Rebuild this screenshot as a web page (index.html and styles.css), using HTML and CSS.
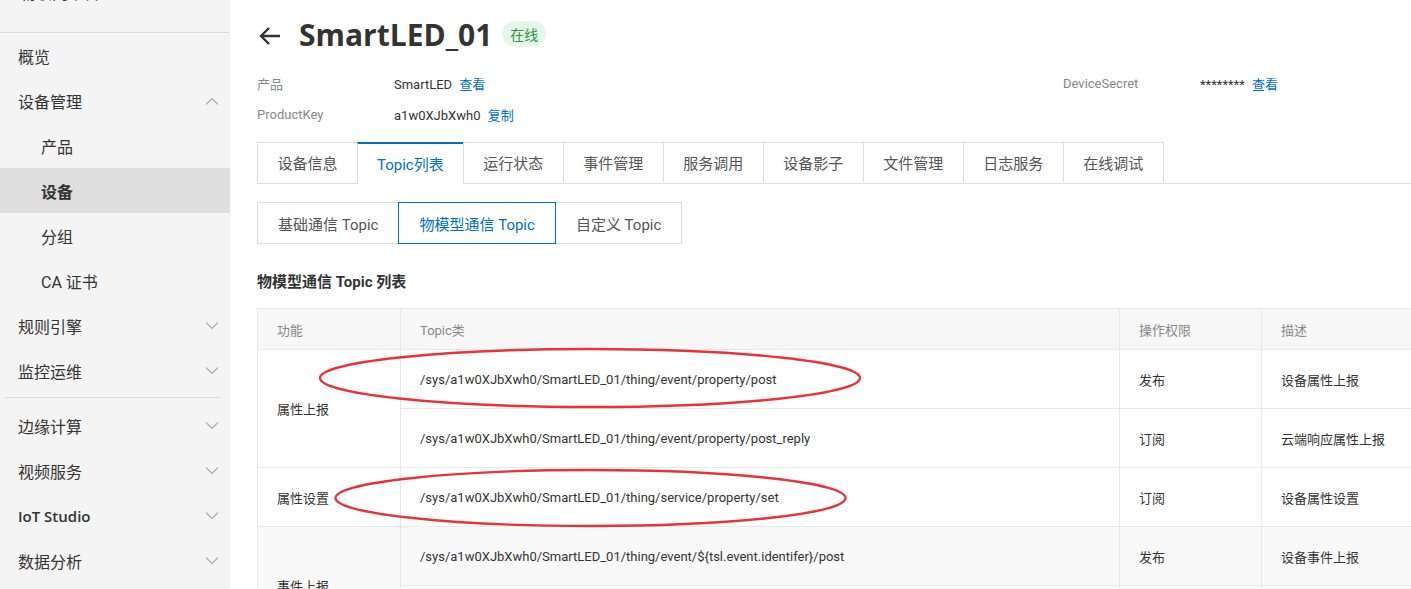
FILE: index.html
```html
<!DOCTYPE html>
<html lang="zh-CN">
<head>
    <meta charset="UTF-8">
    <title>SmartLED_01 - 设备详情</title>
    <link rel="stylesheet" href="styles.css">
</head>
<body>
<div class="layout">
    <aside class="sidebar">
        <div class="brand"><span>物联网平台</span></div>
        <nav class="menu">
            <a class="item">概览</a>
            <a class="item">设备管理
                <svg class="chev" width="14" height="8" viewBox="0 0 14 8"><path d="M1 7.5L7 1.5L13 7.5" fill="none" stroke="#aaa" stroke-width="1.1"/></svg>
            </a>
            <a class="item sub">产品</a>
            <a class="item sub active">设备</a>
            <a class="item sub">分组</a>
            <a class="item sub">CA 证书</a>
            <a class="item">规则引擎
                <svg class="chev" width="14" height="8" viewBox="0 0 14 8"><path d="M1 0.5L7 6.5L13 0.5" fill="none" stroke="#aaa" stroke-width="1.1"/></svg>
            </a>
            <a class="item">监控运维
                <svg class="chev" width="14" height="8" viewBox="0 0 14 8"><path d="M1 0.5L7 6.5L13 0.5" fill="none" stroke="#aaa" stroke-width="1.1"/></svg>
            </a>
            <div class="divider"></div>
            <a class="item">边缘计算
                <svg class="chev" width="14" height="8" viewBox="0 0 14 8"><path d="M1 0.5L7 6.5L13 0.5" fill="none" stroke="#aaa" stroke-width="1.1"/></svg>
            </a>
            <a class="item">视频服务
                <svg class="chev" width="14" height="8" viewBox="0 0 14 8"><path d="M1 0.5L7 6.5L13 0.5" fill="none" stroke="#aaa" stroke-width="1.1"/></svg>
            </a>
            <a class="item latin">IoT Studio
                <svg class="chev" width="14" height="8" viewBox="0 0 14 8"><path d="M1 0.5L7 6.5L13 0.5" fill="none" stroke="#aaa" stroke-width="1.1"/></svg>
            </a>
            <a class="item">数据分析
                <svg class="chev" width="14" height="8" viewBox="0 0 14 8"><path d="M1 0.5L7 6.5L13 0.5" fill="none" stroke="#aaa" stroke-width="1.1"/></svg>
            </a>
        </nav>
    </aside>

    <main class="main">
        <div class="page-head">
            <svg class="back" width="24" height="20" viewBox="0 0 24 20"><path d="M22 10H3M11 2L3 10L11 18" fill="none" stroke="#333" stroke-width="2.4"/></svg>
            <h1>SmartLED_01</h1>
            <span class="badge">在线</span>
        </div>

        <div class="info">
            <span class="label">产品</span>
            <span class="value">SmartLED <a class="link">查看</a></span>
            <span class="label">DeviceSecret</span>
            <span class="value">******** <a class="link">查看</a></span>
            <span class="label">ProductKey</span>
            <span class="value">a1w0XJbXwh0 <a class="link">复制</a></span>
        </div>

        <div class="tabs">
            <a class="tab">设备信息</a>
            <a class="tab active">Topic列表</a>
            <a class="tab">运行状态</a>
            <a class="tab">事件管理</a>
            <a class="tab">服务调用</a>
            <a class="tab">设备影子</a>
            <a class="tab">文件管理</a>
            <a class="tab">日志服务</a>
            <a class="tab">在线调试</a>
        </div>

        <div class="subtabs">
            <a class="subtab">基础通信 Topic</a>
            <a class="subtab active">物模型通信 Topic</a>
            <a class="subtab">自定义 Topic</a>
        </div>

        <h2 class="section-title">物模型通信 Topic 列表</h2>

        <div class="table-wrap">
            <table class="topics">
                <colgroup>
                    <col class="c-func">
                    <col class="c-topic">
                    <col class="c-perm">
                    <col class="c-desc">
                </colgroup>
                <thead>
                    <tr>
                        <th>功能</th>
                        <th>Topic类</th>
                        <th>操作权限</th>
                        <th>描述</th>
                    </tr>
                </thead>
                <tbody>
                    <tr>
                        <td rowspan="2">属性上报</td>
                        <td>/sys/a1w0XJbXwh0/SmartLED_01/thing/event/property/post</td>
                        <td>发布</td>
                        <td>设备属性上报</td>
                    </tr>
                    <tr>
                        <td>/sys/a1w0XJbXwh0/SmartLED_01/thing/event/property/post_reply</td>
                        <td>订阅</td>
                        <td>云端响应属性上报</td>
                    </tr>
                    <tr>
                        <td>属性设置</td>
                        <td>/sys/a1w0XJbXwh0/SmartLED_01/thing/service/property/set</td>
                        <td>订阅</td>
                        <td>设备属性设置</td>
                    </tr>
                    <tr class="hover">
                        <td rowspan="2">事件上报</td>
                        <td>/sys/a1w0XJbXwh0/SmartLED_01/thing/event/${tsl.event.identifer}/post</td>
                        <td>发布</td>
                        <td>设备事件上报</td>
                    </tr>
                    <tr class="hover">
                        <td>/sys/a1w0XJbXwh0/SmartLED_01/thing/event/${tsl.event.identifer}/post_reply</td>
                        <td>订阅</td>
                        <td>云端响应事件上报</td>
                    </tr>
                </tbody>
            </table>
            <svg class="marks" width="700" height="240" viewBox="0 0 700 240">
                <ellipse cx="333" cy="70" rx="270" ry="29" fill="none" stroke="#e8333b" stroke-width="2.4"/>
                <ellipse cx="333.5" cy="190" rx="255" ry="28" fill="none" stroke="#e8333b" stroke-width="2.4"/>
            </svg>
        </div>
    </main>
</div>
</body>
</html>
```

FILE: styles.css
```css
body {
    margin: 0;
    font-family: Roboto, "Noto Sans CJK SC", sans-serif;
    color: #333;
    background-color: #fff;
    overflow: hidden;
}
a {
    cursor: pointer;
}
.layout {
    display: flex;
    min-height: 100vh;
}
.sidebar {
    width: 230px;
    flex-shrink: 0;
    background-color: #f4f4f4;
}
.brand {
    height: 32px;
    overflow: hidden;
    border-bottom: 1px solid #dcdcdc;
    padding: 0 20px;
}
.brand span {
    display: block;
    margin-top: -14px;
    font-size: 16px;
    line-height: 16px;
    color: #333;
}
.menu {
    display: flex;
    flex-direction: column;
}
.item {
    height: 45px;
    display: flex;
    align-items: center;
    justify-content: space-between;
    padding: 0 11px 0 18px;
    font-size: 16px;
    color: #333;
}
.item.sub {
    padding-left: 41px;
}
.item.active {
    background-color: #dedede;
    font-weight: bold;
}
.item.latin {
    font-family: "Open Sans", "Noto Sans CJK SC", sans-serif;
    font-weight: 600;
    font-size: 15px;
}
.divider {
    height: 1px;
    background-color: #dcdcdc;
    margin: 4px 9px 5px 5px;
}
.main {
    flex: 1;
    min-width: 0;
    padding-left: 27px;
}
.page-head {
    height: 68px;
    display: flex;
    align-items: center;
}
.back {
    margin: 4px 17px 0 1px;
}
.page-head h1 {
    margin: 0;
    font-family: "Open Sans", sans-serif;
    font-size: 30px;
    font-weight: bold;
    color: #333;
}
.badge {
    margin-left: 10px;
    padding: 3px 8px;
    border-radius: 13px;
    background-color: #e6f6ea;
    color: #2f9444;
    font-size: 14px;
}
.info {
    display: grid;
    grid-template-columns: 137px 669px 137px auto;
    grid-auto-rows: 31px;
    align-items: center;
    font-size: 13px;
}
.label {
    color: #888;
}
.value {
    color: #333;
}
.link {
    color: #0070cc;
    margin-left: 4px;
}
.tabs {
    display: flex;
    align-items: flex-start;
    height: 41px;
    margin-top: 12px;
    border-bottom: 1px solid #ddd;
    width: 1300px;
}
.tab {
    box-sizing: border-box;
    min-width: 101px;
    height: 40px;
    display: flex;
    align-items: center;
    justify-content: center;
    padding: 0 19px;
    border: 1px solid #ddd;
    border-bottom: none;
    margin-left: -1px;
    font-size: 15px;
    color: #555;
    background-color: #fff;
}
.tab:first-child {
    margin-left: 0;
}
.tab.active {
    color: #0070cc;
    border-top: 2px solid #0070cc;
    height: 42px;
    margin-bottom: -1px;
    padding-bottom: 1px;
}
.subtabs {
    display: flex;
    margin-top: 18px;
}
.subtab {
    height: 40px;
    display: flex;
    align-items: center;
    padding: 0 20px;
    border: 1px solid #ddd;
    margin-left: -1px;
    font-size: 15px;
    color: #555;
    background-color: #fff;
}
.subtab:first-child {
    margin-left: 0;
}
.subtab.active {
    border-color: #0070cc;
    color: #0070cc;
    position: relative;
}
.section-title {
    margin: 28px 0 16px;
    font-size: 15px;
    line-height: 20px;
    font-weight: bold;
}
.table-wrap {
    position: relative;
    width: 1220px;
}
.topics {
    width: 100%;
    border-collapse: collapse;
    font-size: 13px;
    table-layout: fixed;
}
.topics th,
.topics td {
    border: 1px solid #e8e8e8;
    padding: 0 19px;
    text-align: left;
    white-space: nowrap;
}
.topics th {
    height: 40px;
    background-color: #f7f7f7;
    color: #888;
    font-weight: normal;
}
.topics td {
    height: 58px;
    color: #333;
}
.topics tr.hover td {
    background-color: #f9f9f9;
}
.c-func { width: 143px; }
.c-topic { width: 719px; }
.c-perm { width: 142px; }
.marks {
    position: absolute;
    left: 0;
    top: 0;
    pointer-events: none;
}
```
